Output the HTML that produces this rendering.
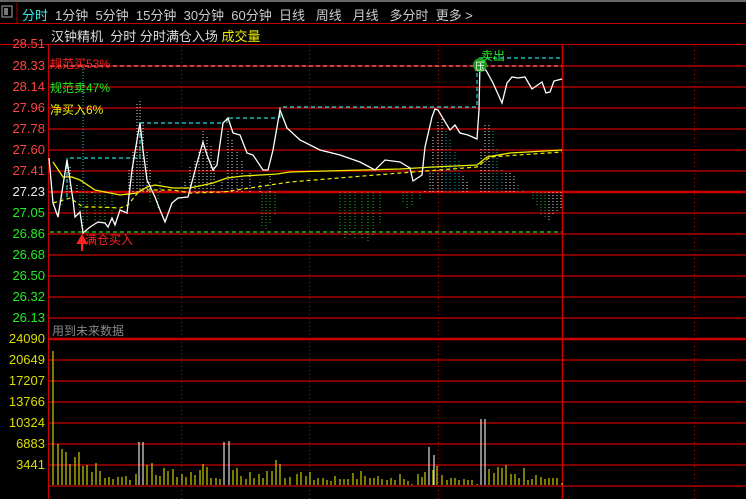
<!DOCTYPE html>
<html><head><meta charset="utf-8"><style>
html,body{margin:0;padding:0;background:#000;width:746px;height:499px;overflow:hidden}
body{position:relative;font-family:"Liberation Sans","Noto Sans CJK SC",sans-serif}
.t{position:absolute;white-space:nowrap;font-size:12px}
.ax{position:absolute;right:701px;font-size:13px;line-height:12px;font-family:"Liberation Sans",sans-serif}
</style></head><body>
<div style="position:absolute;left:0;top:0;width:746px;height:2px;background:#666"></div>
<svg width="746" height="499" style="position:absolute;left:0;top:0">
<rect x="2" y="6" width="10" height="11" fill="none" stroke="#aaa"/><rect x="4" y="8" width="4" height="7" fill="#777"/>
<line x1="17" y1="3" x2="17" y2="23" stroke="#a00"/>
<line x1="0" y1="23.5" x2="746" y2="23.5" stroke="#b00"/>
<line x1="0" y1="44.5" x2="746" y2="44.5" stroke="#c00"/>
<line x1="48.5" y1="44" x2="48.5" y2="499" stroke="#c00"/>
<g stroke="#c00" stroke-width="1.2">
<line x1="49" y1="66" x2="746" y2="66"/><line x1="49" y1="87" x2="746" y2="87"/><line x1="49" y1="108" x2="746" y2="108"/>
<line x1="49" y1="129" x2="746" y2="129"/><line x1="49" y1="150" x2="746" y2="150"/><line x1="49" y1="171" x2="746" y2="171"/>
<line x1="49" y1="213" x2="746" y2="213"/><line x1="49" y1="234" x2="746" y2="234"/><line x1="49" y1="255" x2="746" y2="255"/>
<line x1="49" y1="276" x2="746" y2="276"/><line x1="49" y1="297" x2="746" y2="297"/><line x1="49" y1="318" x2="746" y2="318"/>
<line x1="49" y1="360" x2="746" y2="360"/><line x1="49" y1="381" x2="746" y2="381"/><line x1="49" y1="402" x2="746" y2="402"/>
<line x1="49" y1="423" x2="746" y2="423"/><line x1="49" y1="444" x2="746" y2="444"/><line x1="49" y1="465" x2="746" y2="465"/>
<line x1="49" y1="486" x2="746" y2="486"/>
</g>
<line x1="49" y1="192" x2="746" y2="192" stroke="#c00" stroke-width="2.5"/>
<line x1="49" y1="339" x2="746" y2="339" stroke="#c00" stroke-width="2.5"/>
<line x1="562.5" y1="44" x2="562.5" y2="499" stroke="#c00" stroke-width="1.5"/>
<g stroke="#c00" stroke-dasharray="1 3">
<line x1="181.5" y1="46" x2="181.5" y2="499"/><line x1="309.5" y1="46" x2="309.5" y2="499"/>
<line x1="438.5" y1="46" x2="438.5" y2="499"/><line x1="694.5" y1="46" x2="694.5" y2="499"/>
</g>
<g stroke="#ddd" stroke-dasharray="1 2" stroke-width="1">
<path d="M67 192V160M70 192V165M77 192V185M92 192V195M129 192V170M133 192V150M137 192V103M140 192V100M143 192V120M147 192V150M150 192V170M160 192V182M185 192V180M190 192V165M195 192V160M199 192V150M203 192V130M207 192V135M211 192V145M214 192V160M222 192V180M228 192V130M232 192V140M237 192V150M242 192V160M250 192V172M260 192V180M270 192V175M425 192V190M430 192V172M433 192V135M438 192V120M442 192V118M463 192V175M467 192V182M481 192V148M485 192V123M489 192V123M506 192V172M510 192V172M514 192V176M549 192V220M553 192V215M557 192V212M561 192V210"/>
</g>
<g stroke="#1aa" stroke-dasharray="1 2"><path d="M446 192V130M450 192V140M455 192V150M459 192V160M493 192V131M497 192V147M502 192V170M518 192V183M523 192V190"/></g>
<g stroke="#2b2" stroke-dasharray="1 2"><path d="M62 192V205M80 192V215M87 192V222M95 192V220M100 192V225M105 192V225M112 192V215M150 192V202M158 192V210M262 192V228M266 192V230M270 192V225M275 192V215M340 192V230M345 192V240M350 192V235M355 192V238M362 192V240M368 192V242M373 192V235M380 192V225M403 192V204M407 192V210M412 192V205M420 192V200M533 192V200M537 192V206M541 192V215M545 192V218"/></g>
<line x1="50" y1="66" x2="562" y2="66" stroke="#f77" stroke-dasharray="4 3" stroke-width="1.2"/>
<line x1="50" y1="232" x2="562" y2="232" stroke="#2d2" stroke-dasharray="4 3" stroke-width="1.2"/>
<line x1="83" y1="66" x2="83" y2="233" stroke="#2cc" stroke-dasharray="1 2"/>
<path d="M67 197V158H137M140 158V123H223M227 123V118H278M280 118V107H477V58H562" fill="none" stroke="#2dd" stroke-dasharray="4 3" stroke-width="1.2"/>
<polyline fill="none" stroke="#ee0" stroke-width="1.3" points="53,162 63,177 72,177 80,180 95,190 120,195 137,193 147,187 155,185 173,188 190,188 213,183 227,178 243,176 277,174 290,172 400,169 433,167 477,165 487,157 510,153 562,150"/>
<polyline fill="none" stroke="#ee0" stroke-width="1.2" stroke-dasharray="4 3" points="53,203 70,198 83,207 98,207 120,208 128,205 140,190 173,190 190,193 223,192 290,182 400,173 477,167 490,157 562,152"/>
<polyline fill="none" stroke="#fff" stroke-width="1.3" points="49,158 53,203 58,217 67,160 73,200 75,217 80,212 83,233 90,227 98,222 105,223 108,227 112,218 115,225 120,210 127,213 132,170 137,140 140,123 143,150 147,180 155,197 160,210 165,222 172,203 178,198 188,197 197,163 203,142 207,155 213,170 217,165 223,123 228,118 233,133 240,135 247,153 253,155 263,170 268,170 273,150 280,110 287,128 300,140 320,150 340,155 360,162 375,170 385,160 400,162 410,168 413,181 422,175 425,147 432,117 435,109 438,110 450,130 455,125 460,133 468,135 477,139 479,110 480,62 487,72 493,83 502,103 507,83 512,77 518,78 525,77 532,89 542,82 546,93 550,92 554,81 562,79"/>
<circle cx="480" cy="65" r="7" fill="#1a9a1a"/>
<text x="475" y="70" font-size="10" fill="#fff" font-family="Noto Sans CJK SC">压</text>
<path d="M82 251V240M78 243L82 236L86 243Z" stroke="#f22" fill="#f22" stroke-width="2"/>
<path stroke="#cc0" stroke-width="1.2" fill="none" d="M53 485V351M58 485V444M62 485V449M66 485V452M70 485V464M75 485V457M79 485V452M83 485V466M87 485V465M92 485V472M96 485V463M100 485V471M105 485V478M109 485V477M113 485V479M118 485V477M122 485V477M126 485V476M130 485V480M136 485V474M147 485V465M152 485V463M156 485V475M160 485V476M164 485V468M168 485V471M173 485V469M177 485V477M182 485V474M186 485V477M191 485V472M195 485V475M200 485V470M203 485V464M207 485V467M211 485V478M216 485V478M220 485V479M233 485V470M237 485V468M241 485V476M246 485V479M250 485V472M254 485V478M259 485V474M263 485V478M267 485V471M272 485V471M276 485V460M280 485V464M285 485V478M290 485V477M297 485V474M301 485V472M306 485V476M310 485V472M314 485V480M318 485V478M323 485V478M327 485V480M331 485V481M335 485V476M340 485V479M344 485V479M348 485V479M353 485V473M357 485V479M361 485V471M365 485V476M370 485V478M374 485V478M378 485V476M382 485V479M387 485V480M391 485V478M395 485V480M400 485V474M404 485V479M408 485V481M412 485V484M418 485V474M422 485V477M425 485V472M433 485V470M437 485V466M442 485V475M447 485V480M451 485V478M455 485V478M459 485V480M464 485V479M468 485V480M472 485V480M477 485V484M489 485V469M494 485V473M498 485V467M502 485V468M506 485V465M511 485V474M515 485V474M519 485V478M524 485V468M528 485V480M532 485V479M536 485V475M541 485V477M545 485V479M549 485V478M553 485V478M557 485V478M562 485V483"/>
<path stroke="#ddd" stroke-width="1.2" fill="none" d="M139 485V442M143 485V442M224 485V442M229 485V441M429 485V447M434 485V455M481 485V419M485 485V419"/>
</svg>
<div class="t" style="left:22px;top:5px;font-size:13px;color:#3ee">分时</div>
<div class="t" style="left:55px;top:5px;font-size:13px;color:#ccc">1分钟&nbsp;&nbsp;5分钟&nbsp;&nbsp;15分钟&nbsp;&nbsp;30分钟&nbsp;&nbsp;60分钟&nbsp;&nbsp;日线&nbsp;&nbsp;&nbsp;周线&nbsp;&nbsp;&nbsp;月线&nbsp;&nbsp;&nbsp;多分时&nbsp;&nbsp;更多 &gt;</div>
<div class="t" style="left:51px;top:26px;font-size:13px;color:#ddd">汉钟精机&nbsp;&nbsp;分时 分时满仓入场 <span style="color:#ee0">成交量</span></div>
<div class="t" style="left:50px;top:55px;color:#f22">规范买53%</div>
<div class="t" style="left:50px;top:79px;color:#2e2">规范卖47%</div>
<div class="t" style="left:50px;top:101px;color:#ee0">净买入6%</div>
<div class="t" style="left:85px;top:231px;color:#f22">满仓买入</div>
<div class="t" style="left:481px;top:47px;color:#2e2">卖出</div>
<div class="t" style="left:52px;top:322px;color:#888">用到未来数据</div>
<div class="ax" style="top:38px;color:#f44">28.51</div>
<div class="ax" style="top:60px;color:#f44">28.33</div>
<div class="ax" style="top:81px;color:#f44">28.14</div>
<div class="ax" style="top:102px;color:#f44">27.96</div>
<div class="ax" style="top:123px;color:#f44">27.78</div>
<div class="ax" style="top:144px;color:#f44">27.60</div>
<div class="ax" style="top:165px;color:#f44">27.41</div>
<div class="ax" style="top:186px;color:#eee">27.23</div>
<div class="ax" style="top:207px;color:#2e2">27.05</div>
<div class="ax" style="top:228px;color:#2e2">26.86</div>
<div class="ax" style="top:249px;color:#2e2">26.68</div>
<div class="ax" style="top:270px;color:#2e2">26.50</div>
<div class="ax" style="top:291px;color:#2e2">26.32</div>
<div class="ax" style="top:312px;color:#2e2">26.13</div>
<div class="ax" style="top:333px;color:#dd0">24090</div>
<div class="ax" style="top:354px;color:#dd0">20649</div>
<div class="ax" style="top:375px;color:#dd0">17207</div>
<div class="ax" style="top:396px;color:#dd0">13766</div>
<div class="ax" style="top:417px;color:#dd0">10324</div>
<div class="ax" style="top:438px;color:#dd0">6883</div>
<div class="ax" style="top:459px;color:#dd0">3441</div>
</body></html>
